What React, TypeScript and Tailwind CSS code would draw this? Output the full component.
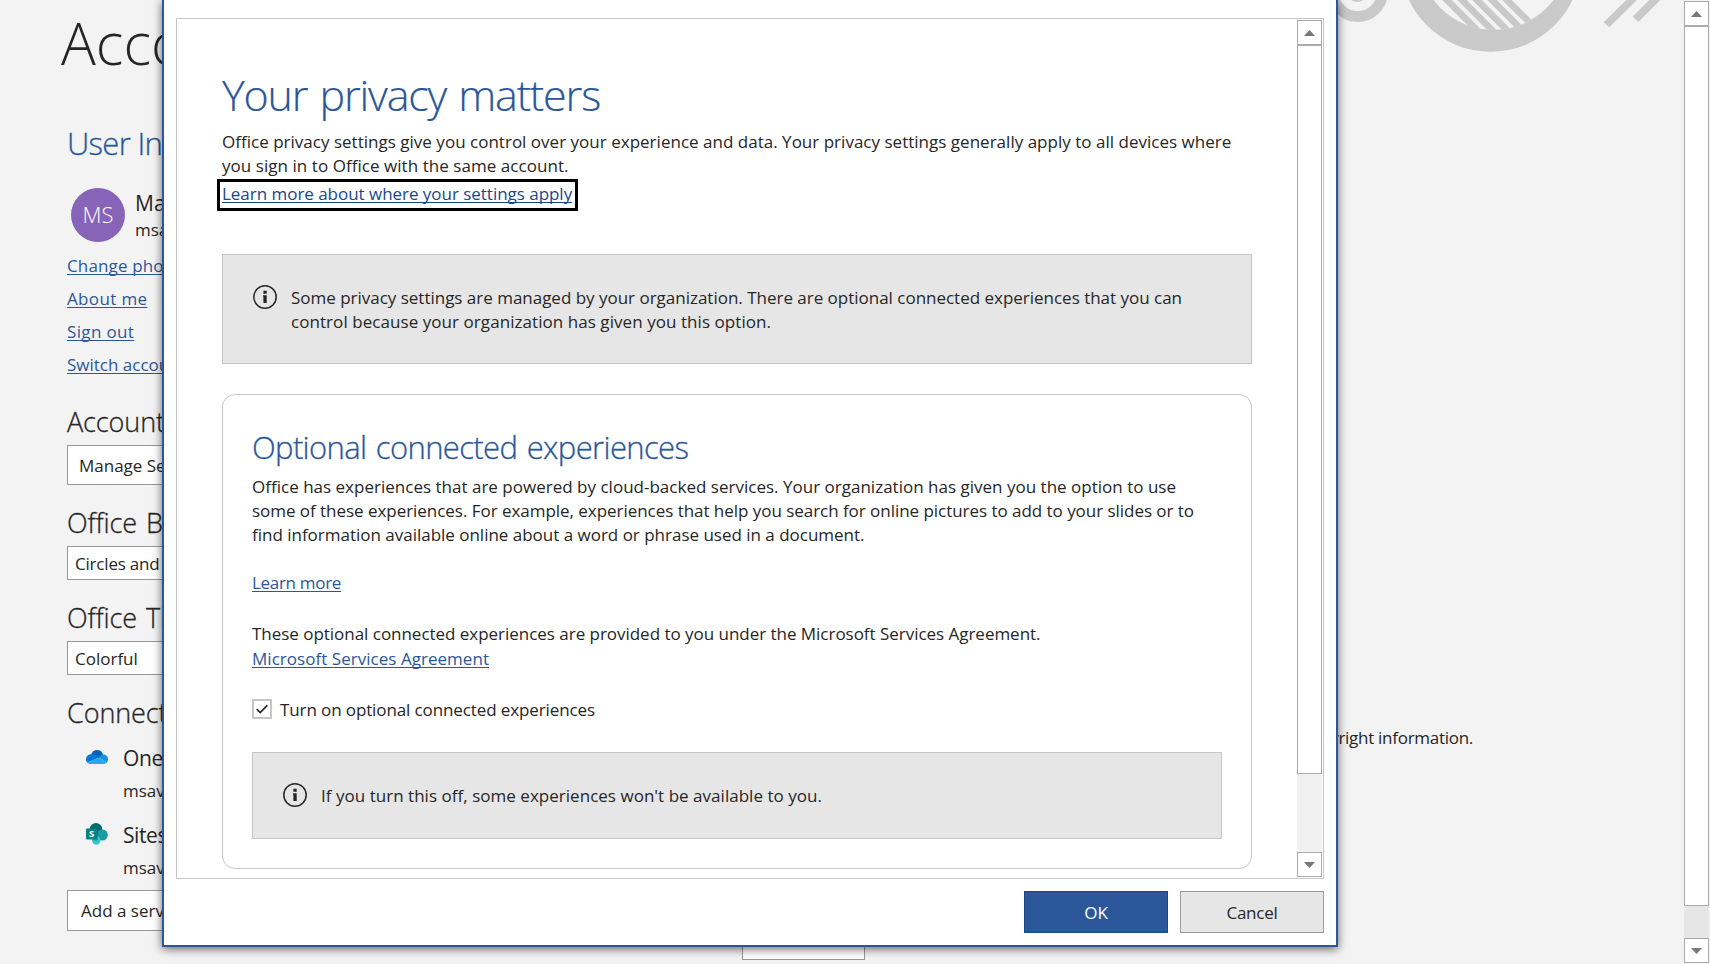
import React from "react";

const link = "text-[#2b579a] underline decoration-1 underline-offset-[2px] [text-decoration-skip-ink:none]";

function ArrowButton({ down = false }: { down?: boolean }) {
  return (
    <div className="flex h-[25px] w-[25px] shrink-0 items-center justify-center border border-[#ababab] bg-white">
      <svg width="11" height="6" viewBox="0 0 11 6" className="mt-px" fill="#777777">
        <path d={down ? "M0 0H11L5.5 6Z" : "M0 6H11L5.5 0Z"} />
      </svg>
    </div>
  );
}

function InfoIcon() {
  return (
    <svg width="24" height="24" viewBox="0 0 24 24" className="shrink-0">
      <circle cx="12" cy="12" r="11.2" fill="none" stroke="#262626" strokeWidth="1.5" />
      <path d="M10.4 5.8h3.3v3h-3.3zM10 10.3h3.7V18h-3.3v-6.4H10z" fill="#262626" />
    </svg>
  );
}

function OneDriveIcon() {
  return (
    <svg width="22" height="14" viewBox="0 0 22 14">
      <path d="M5 4.6C6 2 8.300 0 11 0c3 0 5.400 2 6.100 4.600L13 8 5 4.600z" fill="#0364b8" />
      <path d="M4.600 4.300C2 4.600 0 6.600 0 9.200c0 1.300.5 2.500 1.300 3.300L13.300 7.600 9 5C7.700 4.200 6.200 4 4.600 4.300z" fill="#0078d4" />
      <path d="M17 4.500c2.800 0 5 2 5 4.700 0 1.200-.4 2.200-1.100 3L12.800 7.500C14 5.500 15.300 4.500 17 4.500z" fill="#1490df" />
      <path d="M1.300 12.500 13 7.400l8 4.800C20.200 13.300 19 14 17.500 14H4.800c-1.400 0-2.600-.5-3.500-1.500z" fill="#28a8ea" />
    </svg>
  );
}

function SharePointIcon() {
  return (
    <svg width="22" height="22" viewBox="0 0 22 22">
      <circle cx="10" cy="6.200" r="6.200" fill="#036c70" />
      <circle cx="16.300" cy="12" r="5.500" fill="#1a9ba1" />
      <circle cx="10.300" cy="17.500" r="4.200" fill="#37c6d0" />
      <path d="M1 5.500h11v12H7a5 5 0 0 1-1-1.500z" fill="#000" opacity=".22" />
      <rect x="0" y="5.500" width="11" height="11" rx=".8" fill="#038387" />
      <text x="5.500" y="14.300" textAnchor="middle" fontSize="9.500" fontWeight="700" fill="#fff" fontFamily="Open Sans, sans-serif">S</text>
    </svg>
  );
}

function Backdrop() {
  const stripes = [1451.7, 1466.7, 1481.7, 1496.7, 1511.700];
  return (
    <svg width="340" height="60" viewBox="1330 0 340 60" className="absolute left-[1330px] top-0">
      <defs>
        <clipPath id="disc"><circle cx="1493.500" cy="-45" r="75" /></clipPath>
      </defs>
      <circle cx="1357.700" cy="-8.100" r="24.600" fill="none" stroke="#c9c9c9" strokeWidth="11" />
      <circle cx="1357.300" cy="-8.100" r="10" fill="#c9c9c9" />
      <circle cx="1490.700" cy="-38.700" r="90.500" fill="#c9c9c9" />
      <circle cx="1493.500" cy="-45" r="75" fill="#f3f3f3" />
      <g clipPath="url(#disc)" fill="#c9c9c9">
        {stripes.map((x) => (
          <path key={x} d={`M${x - 9.500} 0H${x}l50 50h-9.500z`} />
        ))}
      </g>
      <path d="M1626.300 0h10.700L1609.300 27.300l-5.600-5zM1649.300 0h11L1638.300 22l-5.500-5.400z" fill="#c9c9c9" />
    </svg>
  );
}

function Field({ children, className }: { children: React.ReactNode; className: string }) {
  return <div className={`flex w-[230px] items-center border border-[#999999] bg-white pt-px ${className}`}>{children}</div>;
}

function Service({ icon, name }: { icon: React.ReactNode; name: string }) {
  return (
    <div className="flex">
      <div className="-mt-px flex h-7 w-[37px] items-center">{icon}</div>
      <div>
        <div className="text-[21px] leading-7 tracking-[-0.4px]">{name}</div>
        <div className="mt-[7px]">msavery@contoso.com</div>
      </div>
    </div>
  );
}

function AccountPage() {
  const section = "text-[27px] font-light leading-9 tracking-[-0.1px] [word-spacing:2px] [-webkit-text-stroke:0.3px_#262626]";
  return (
    <div className="flex h-[964px] w-[1710px]">
      <div className="flex w-[675px] shrink-0 flex-col items-start pl-[67px] pt-[3px]">
        <h1 className="-ml-[6px] text-[58px] font-light leading-[80px]">Account</h1>
        <h2 className="mt-[40px] text-[31px] font-light leading-10 tracking-[-0.7px] text-[#2b579a] [-webkit-text-stroke:0.3px_#2b579a]">User Information</h2>
        <div className="mt-[25px] flex h-[54px] pl-1">
          <div className="flex h-[54px] w-[54px] items-center justify-center rounded-full bg-[#8764b8] pb-[2px] text-[22px] font-light text-white">MS</div>
          <div className="ml-[10px] pt-px">
            <div className="text-[21px] leading-7">Mark Savery</div>
            <div className="mt-px">msavery@contoso.com</div>
          </div>
        </div>
        <div className="mt-[12px] flex flex-col items-start gap-[9px]">
          <a className={`${link} tracking-[0.15px]`}>Change photo</a>
          <a className={`${link} tracking-[0.35px]`}>About me</a>
          <a className={`${link} tracking-[0.35px]`}>Sign out</a>
          <a className={link}>Switch account</a>
        </div>
        <h3 className={`${section} mt-[27px]`}>Account Privacy</h3>
        <Field className="mt-[5px] h-10 pl-[11px]">Manage Settings</Field>
        <h3 className={`${section} mt-[20px]`}>Office Background</h3>
        <Field className="mt-[5px] h-[34px] pl-[7px] tracking-[-0.2px]">Circles and Stripes</Field>
        <h3 className={`${section} mt-[20px]`}>Office Theme</h3>
        <Field className="mt-[5px] h-[34px] pl-[7px]">Colorful</Field>
        <h3 className={`${section} mt-[20px]`}>Connected Services:</h3>
        <div className="mt-[13px] flex flex-col gap-[18px] pl-[19px]">
          <Service icon={<OneDriveIcon />} name="OneDrive" />
          <Service icon={<SharePointIcon />} name="Sites" />
        </div>
        <Field className="mt-[10px] h-[41px] pl-[13px]">Add a service</Field>
      </div>
      <div className="flex w-[798px] flex-col pt-[726px]">
        <p className="text-right tracking-[-0.28px]">Learn more about Word, Support, Product ID, and Copyright information.</p>
        <div className="ml-[67px] mt-[150px] h-[60px] w-[123px] border border-[#999999] bg-white" />
      </div>
      <div className="ml-auto flex h-[964px] w-[26px] flex-col pb-px pr-px pt-px">
        <ArrowButton />
        <div className="h-[880px] border border-[#ababab] bg-white" />
        <div className="flex-1 bg-[#e6e6e6]" />
        <ArrowButton down />
      </div>
    </div>
  );
}

function PrivacyDialog() {
  return (
    <div className="absolute left-[162px] top-0 flex h-[947px] w-[1176px] flex-col border-x-2 border-b-2 border-[#2b579a] bg-white px-3 pt-[18px] shadow-[0_2px_9px_rgba(0,0,0,0.6)]">
      <div className="flex h-[861px] border border-[#c6c6c6]">
        <div className="flex-1 pl-[45px] pt-[48px]">
          <h1 className="text-[43px] font-light leading-[56px] tracking-[-1.15px] text-[#2b579a] [-webkit-text-stroke:0.2px_#2b579a] [word-spacing:2px]">Your privacy matters</h1>
          <p className="mt-[7px] whitespace-nowrap tracking-[0.015px]">
            Office privacy settings give you control over your experience and data. Your privacy settings generally apply to all devices where
            <br />
            <span className="tracking-[0.05px]">you sign in to Office with the same account.</span>
          </p>
          <div className="-ml-[5px] mt-px flex h-8 w-[361px] items-start whitespace-nowrap border-[3px] border-black pl-[2px]">
            <a className="tracking-[-0.03px] text-[#19478a] underline decoration-1 underline-offset-[2px] [text-decoration-skip-ink:none]">Learn more about where your settings apply</a>
          </div>
          <div className="mt-[43px] flex h-[110px] w-[1030px] gap-[14px] border border-[#c6c6c6] bg-[#e6e6e6] pl-[30px] pt-[30px]">
            <InfoIcon />
            <p className="mt-px whitespace-nowrap tracking-[-0.013px]">
              Some privacy settings are managed by your organization. There are optional connected experiences that you can
              <br />
              <span className="tracking-[0.06px]">control because your organization has given you this option.</span>
            </p>
          </div>
          <div className="mt-[30px] flex h-[475px] w-[1030px] flex-col items-start whitespace-nowrap rounded-[13px] border border-[#c6c6c6] pl-[29px] pt-8">
            <h2 className="text-[31px] font-light leading-10 tracking-[-0.63px] text-[#2b579a] [-webkit-text-stroke:0.3px_#2b579a] [word-spacing:2px]">Optional connected experiences</h2>
            <p className="mt-2 tracking-[0.01px]">
              Office has experiences that are powered by cloud-backed services. Your organization has given you the option to use
              <br />
              <span className="tracking-[-0.038px]">some of these experiences. For example, experiences that help you search for online pictures to add to your slides or to</span>
              <br />
              <span className="tracking-[-0.011px]">find information available online about a word or phrase used in a document.</span>
            </p>
            <a className={`${link} mt-[24px] tracking-[-0.3px]`}>Learn more</a>
            <p className="mt-[27px] tracking-[-0.028px]">These optional connected experiences are provided to you under the Microsoft Services Agreement.</p>
            <a className={`${link} mt-px tracking-[0.035px]`}>Microsoft Services Agreement</a>
            <label className="mt-[28px] flex h-5 items-center gap-2 tracking-[-0.11px]">
              <span className="h-5 w-5 border-2 border-[#c6c6c6] bg-white">
                <svg width="16" height="16" viewBox="2 2 16 16" fill="none" stroke="#262626" strokeWidth="1.7">
                  <path d="M4.700 10.100 8.200 13.500 15.300 6.300" />
                </svg>
              </span>
              <span className="mt-[2px]">Turn on optional connected experiences</span>
            </label>
            <div className="mt-[33px] flex h-[87px] w-[970px] gap-[14px] border border-[#c6c6c6] bg-[#e6e6e6] pl-[30px] pt-[30px]">
              <InfoIcon />
              <p className="mt-px tracking-[0.028px]">If you turn this off, some experiences won't be available to you.</p>
            </div>
          </div>
        </div>
        <div className="flex w-[26px] flex-col pb-px pr-px pt-px">
          <ArrowButton />
          <div className="h-[729px] border border-[#ababab] bg-white" />
          <div className="flex-1 bg-[#f1f1f1]" />
          <ArrowButton down />
        </div>
      </div>
      <div className="mt-3 flex justify-end gap-3">
        <button className="h-[42px] w-36 border border-[#19478a] bg-[#2b579a] pt-[2px] text-white">OK</button>
        <button className="h-[42px] w-36 border border-[#999999] bg-[#e6e6e6] pt-[2px] tracking-[-0.25px]">Cancel</button>
      </div>
    </div>
  );
}

export default function App() {
  return (
    <div className="relative h-[964px] w-[1710px] overflow-hidden bg-[#f3f3f3] font-['Open_Sans','Noto_Sans',sans-serif] text-[17px] leading-6 text-[#262626]">
      <AccountPage />
      <Backdrop />
      <PrivacyDialog />
    </div>
  );
}
